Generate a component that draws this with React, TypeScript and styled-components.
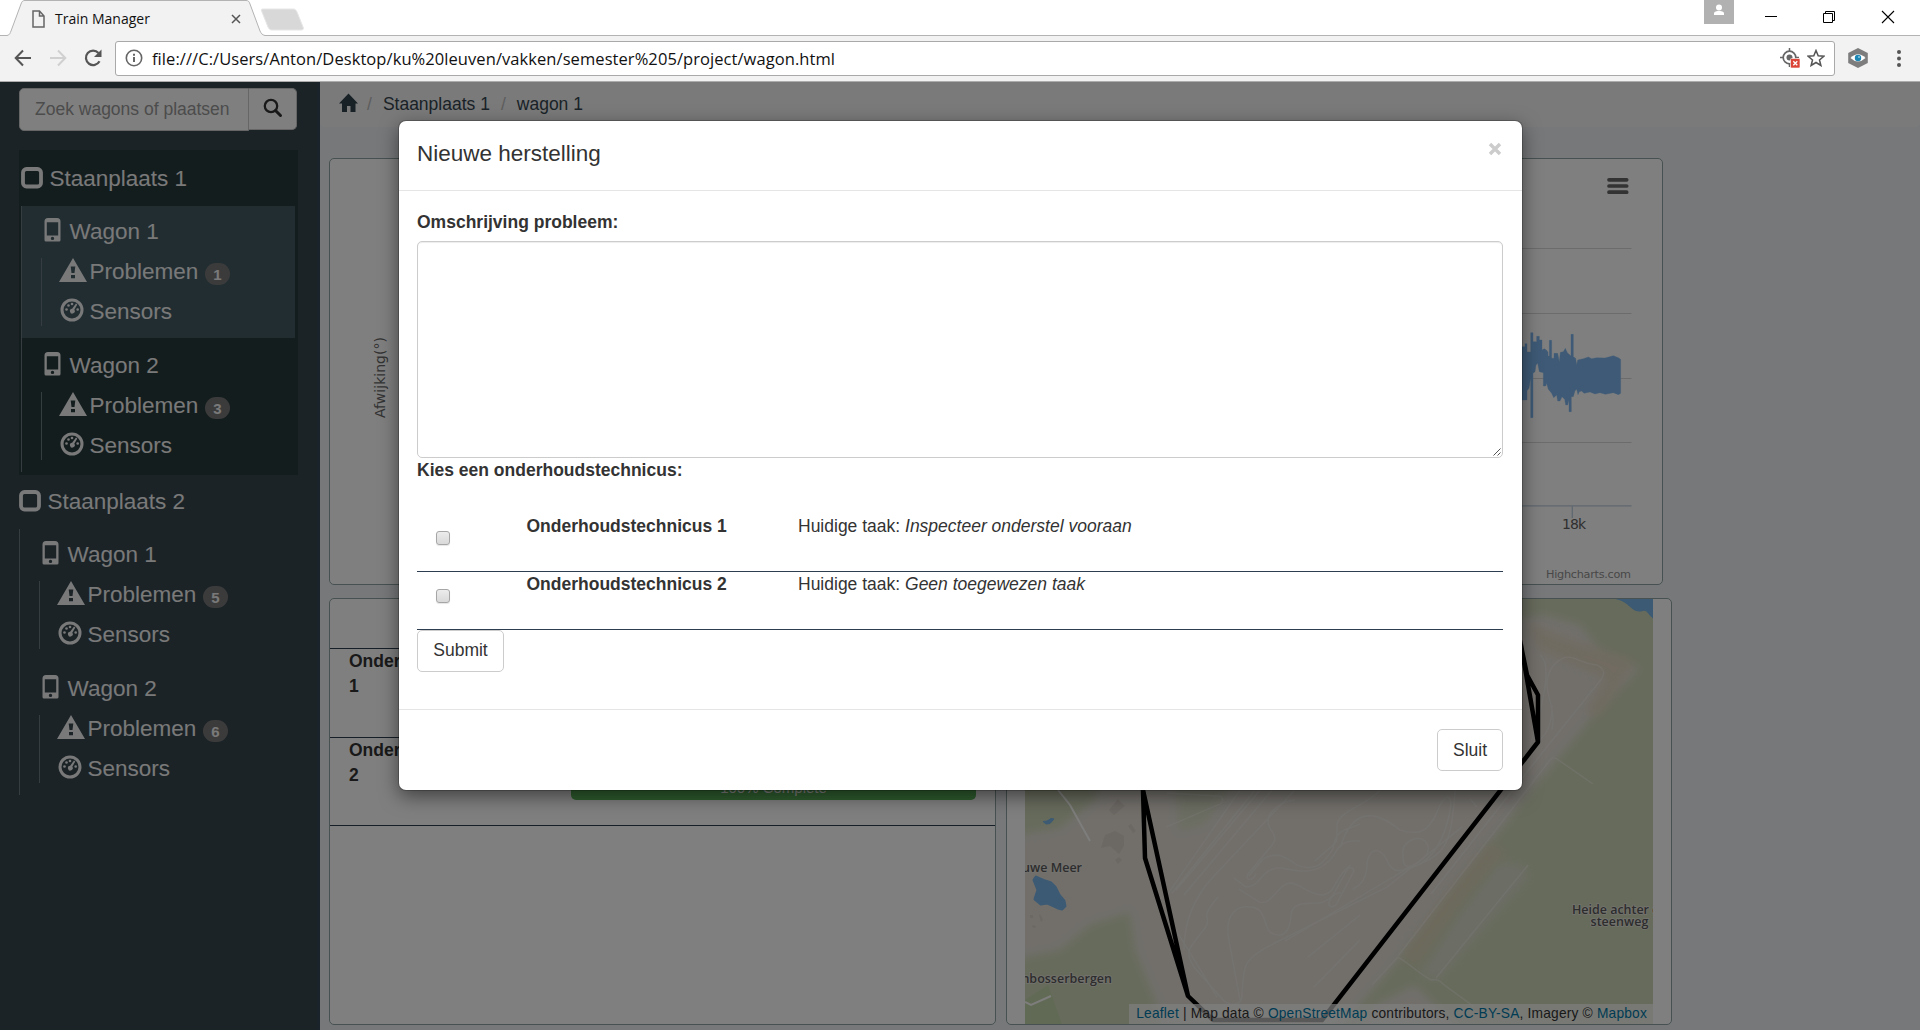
import React from "react";
import styled, { createGlobalStyle } from "styled-components";

const GlobalStyle = createGlobalStyle`
  * { box-sizing: border-box; }
  html, body { margin: 0; padding: 0; overflow: hidden; }
  body {
    font-family: "Liberation Sans", Arial, sans-serif;
    font-size: 17.5px;
    line-height: 25px;
    color: #333;
    background: #fff;
  }
`;

/* ---------- window frame ---------- */

const Window = styled.div`
  width: 1920px;
  height: 1030px;
  display: flex;
  flex-direction: column;
  overflow: hidden;
`;

const TabStrip = styled.div`
  height: 36px;
  display: flex;
  align-items: flex-start;
  background: linear-gradient(#fff 35px, #b3b3b3 35px);
`;

const Tab = styled.div`
  position: relative;
  width: 258px;
  height: 36px;
  margin-left: 7px;
  padding: 0 24px 0 25px;
  display: flex;
  align-items: center;
`;

const TabShape = styled.svg`
  position: absolute;
  inset: 0;
`;

const TabTitle = styled.span`
  position: relative;
  flex: 1;
  margin: 2px 0 0 10px;
  font: 14px/20px "Open Sans", sans-serif;
  letter-spacing: 0;
  color: #111;
  white-space: nowrap;
`;

const TabIcon = styled.svg`
  position: relative;
  flex: none;
  margin-top: 2px;
`;

const NewTab = styled.svg`
  margin: 8px 0 0 -5px;
`;

const WindowButtons = styled.div`
  margin-left: auto;
  display: flex;
  align-items: flex-start;
`;

const UserBadge = styled.div`
  width: 30px;
  height: 24px;
  margin-right: 30px;
  background: #b1b1b1;
`;

const WindowButton = styled.svg`
  margin: 10px 25px 0 0;
  padding: 0;
`;

const Toolbar = styled.div`
  height: 46px;
  display: flex;
  align-items: center;
  padding: 0 0 1px 13px;
  background: #f2f2f2;
  border-bottom: 1px solid #acacac;
`;

const NavIcon = styled.svg<{ $gap: number }>`
  flex: none;
  margin-right: ${(p) => p.$gap}px;
`;

const Omnibox = styled.div`
  flex: 1;
  height: 35px;
  display: flex;
  align-items: center;
  padding: 0 9px 0 9px;
  background: #fff;
  border: 1px solid #a9a9a9;
  border-radius: 3px;
`;

const Url = styled.span`
  flex: 1;
  margin: 1px 0 0 7px;
  font: 16.5px/24px "Open Sans", sans-serif;
  letter-spacing: 0.07px;
  color: #111;
  white-space: nowrap;
`;

/* ---------- page ---------- */

const Page = styled.div`
  position: relative;
  flex: 1;
  display: flex;
  background: #eff1f4;
  overflow: hidden;
`;

const Sidebar = styled.aside`
  width: 320px;
  padding: 6px 20px 0 19px;
  background: #36464f;
  border-right: 3px solid #344655;
`;

const SearchGroup = styled.div`
  display: flex;
  align-items: flex-start;
  width: 278px;
  margin-bottom: 19px;
`;

const SearchInput = styled.div`
  width: 230px;
  height: 43px;
  padding: 0 15px;
  line-height: 41px;
  color: #999;
  background: #fff;
  border: 1px solid #ccc;
  border-radius: 5px 0 0 5px;
  white-space: nowrap;
`;

const SearchButton = styled.div`
  width: 48px;
  height: 42px;
  display: flex;
  align-items: center;
  justify-content: center;
  padding-bottom: 3px;
  background: #fff;
  border: 1px solid #ccc;
  border-left: 0;
  border-radius: 0 5px 5px 0;
`;

const Place = styled.section<{ $active?: boolean }>`
  width: ${(p) => (p.$active ? 279 : 281)}px;
  margin-left: ${(p) => (p.$active ? 0 : -2)}px;
  padding: ${(p) => (p.$active ? "2px 3px 3px 2px" : "0 3px 0 2px")};
  background: ${(p) => (p.$active ? "#293a3d" : "transparent")};
  color: #f2f2f2;
  font-size: 22.5px;
  line-height: 30px;
`;

const PlaceTitle = styled.div`
  height: 54px;
  display: flex;
  align-items: center;
  gap: 6.5px;
`;

const WagonList = styled.div`
  display: flex;
  flex-direction: column;
  gap: 2px;
  border-left: 1px solid #6d7b80;
`;

const Wagon = styled.div<{ $active?: boolean }>`
  height: 132px;
  padding: 6px 0 0 19px;
  background: ${(p) => (p.$active ? "#445b65" : "transparent")};
`;

const WagonTitle = styled.div`
  height: 46px;
  display: flex;
  gap: 8.5px;
  padding-left: 3px;
  line-height: 40px;
`;

const SubList = styled.div`
  display: flex;
  flex-direction: column;
  gap: 12px;
  padding-left: 17px;
  border-left: 1px solid #6d7b80;
`;

const SubItem = styled.div`
  height: 28px;
  display: flex;
  align-items: center;
  gap: 2.5px;
`;

const Badge = styled.span`
  width: 25px;
  height: 22px;
  margin: 4px 0 0 4px;
  border-radius: 12px;
  background: #777;
  font-size: 15px;
  font-weight: bold;
  line-height: 23px;
  text-align: center;
`;

const SideIcon = styled.svg<{ $shift?: number }>`
  flex: none;
  fill: #f2f2f2;
  margin-top: ${(p) => p.$shift ?? 0}px;
`;

const Main = styled.main`
  flex: 1;
  display: flex;
  flex-direction: column;
`;

const Breadcrumb = styled.nav`
  height: 45px;
  display: flex;
  align-items: center;
  padding: 0 0 1px 19px;
  background: #f5f5f5;
  border-radius: 0 0 5px 5px;
  color: #36454f;
`;

const HomeIcon = styled.svg`
  margin-top: -2px;
`;

const Separator = styled.span<{ $before: number }>`
  margin: 0 11px 0 ${(p) => p.$before}px;
  color: #bbb;
`;

const Dashboard = styled.div`
  display: flex;
  flex-direction: column;
  gap: 13px;
  padding: 31px 0 0 9px;
`;

const PanelRow = styled.div`
  display: flex;
  gap: 10px;
`;

const Panel = styled.section<{ $width: number }>`
  width: ${(p) => p.$width}px;
  height: 427px;
  background: #fff;
  border: 1px solid #8fa3a3;
  border-radius: 5px;
  overflow: hidden;
`;

const TaskHead = styled.div`
  height: 50px;
  border-bottom: 1px solid #2c3e50;
`;

const TaskRow = styled.div`
  height: 88.7px;
  display: grid;
  grid-template-columns: 221px 405px;
  padding-left: 20px;
  border-bottom: 1px solid #2c3e50;
`;

const TaskName = styled.b`
  width: 190px;
  margin-left: -1px;
`;

const Progress = styled.div`
  height: 25px;
  margin-top: 37px;
  border-radius: 5px;
  background: #5cb85c;
  color: #fff;
  font-size: 15px;
  text-align: center;
`;

const MapFrame = styled.div`
  position: relative;
  width: 628px;
  height: 425px;
  margin-left: 18px;
  overflow: hidden;
`;

const Attribution = styled.div`
  position: absolute;
  right: 0;
  bottom: 0;
  height: 20px;
  padding: 0 6px 0 7px;
  background: rgba(255, 255, 255, 0.7);
  font-size: 13.75px;
  letter-spacing: 0.19px;
  line-height: 19px;
  white-space: nowrap;
  color: #333;
`;

const MapLink = styled.span`
  color: #0078a8;
`;

/* ---------- modal ---------- */

const Backdrop = styled.div`
  position: absolute;
  inset: 0;
  padding: 39px 0 0 399px;
  background: rgba(0, 0, 0, 0.5);
`;

const Modal = styled.div`
  width: 1123px;
  height: 669px;
  display: flex;
  flex-direction: column;
  background: #fff;
  border-radius: 7px;
  box-shadow: 0 6px 19px rgba(0, 0, 0, 0.5), 0 0 0 1px rgba(0, 0, 0, 0.2);
`;

const ModalHeader = styled.header`
  height: 70px;
  display: flex;
  align-items: flex-start;
  justify-content: space-between;
  padding: 17px 20px 0 18px;
  border-bottom: 1px solid #e5e5e5;
`;

const ModalTitle = styled.h4`
  margin: 0;
  font-size: 22.5px;
  font-weight: normal;
  line-height: 32px;
`;

const CloseIcon = styled.svg`
  margin-top: 4px;
`;

const ModalBody = styled.div`
  height: 518px;
  padding: 19px 19px 0 18px;
`;

const Label = styled.label`
  display: block;
  font-weight: bold;
`;

const TextArea = styled.div`
  height: 217px;
  margin-top: 6px;
  display: flex;
  align-items: flex-end;
  justify-content: flex-end;
  padding: 1px;
  border: 1px solid #ccc;
  border-radius: 5px;
  box-shadow: inset 0 1px 1px rgba(0, 0, 0, 0.075);
`;

const Technicians = styled.div`
  margin-top: 31px;
`;

const Technician = styled.div`
  height: 58px;
  display: grid;
  grid-template-columns: 109.5px 271.5px 1fr;
  border-bottom: 1px solid #2c3e50;
`;

const CheckBox = styled.span`
  width: 14px;
  height: 14px;
  margin: 17px 0 0 19px;
  border: 1px solid #a6a6a6;
  border-radius: 3px;
  background: linear-gradient(#ececec, #d9d9d9);
  box-shadow: 0 1px 1px rgba(0, 0, 0, 0.1);
`;

const Button = styled.button<{ $width: number; $lift?: number }>`
  width: ${(p) => p.$width}px;
  height: 42px;
  padding: 0 0 ${(p) => p.$lift ?? 0}px;
  font: 17.5px/25px "Liberation Sans", Arial, sans-serif;
  color: #333;
  background: #fff;
  border: 1px solid #ccc;
  border-radius: 5px;
`;

const ModalFooter = styled.footer`
  flex: 1;
  display: flex;
  justify-content: flex-end;
  align-items: flex-start;
  padding: 19px 19px 0;
  border-top: 1px solid #e5e5e5;
`;

/* ---------- drawings ---------- */

const WarningIcon = () => (
  <SideIcon $shift={-5} width="28" height="24" viewBox="0 0 28 24">
    <path fillRule="evenodd" d="M14 0 28 24H0ZM11.7 8.5l.8 6.5h3l.8-6.5ZM12 17h4v3.3h-4Z" />
  </SideIcon>
);

const GaugeIcon = () => (
  <SideIcon $shift={-4} width="28" height="24" viewBox="0 0 28 24">
    <circle cx="13" cy="12" r="10" fill="none" stroke="#f2f2f2" strokeWidth="3" />
    <circle cx="7.5" cy="11.5" r="1.3" />
    <circle cx="9.5" cy="7.5" r="1.3" />
    <circle cx="13" cy="6" r="1.3" />
    <circle cx="18.7" cy="11.5" r="1.3" />
    <path d="M17 5.6l1.3.8-3 5.3a2.4 2.4 0 1 1-2.2-1Z" />
  </SideIcon>
);

const PhoneIcon = () => (
  <SideIcon $shift={6} width="17" height="24" viewBox="0 0 17 24">
    <path
      fillRule="evenodd"
      d="M4 0h9a3.500 3.500 0 0 1 3.500 3.500v18.500a1.500 1.500 0 0 1-1.500 1.500H2A1.500 1.500 0 0 1 .5 22V3.500A3.500 3.500 0 0 1 4 0ZM2.800 4.300v13.200h11.400V4.300ZM8.500 18.700a1.700 1.700 0 1 0 0 3.400 1.700 1.700 0 0 0 0-3.400Z"
    />
  </SideIcon>
);

const SquareIcon = () => (
  <SideIcon $shift={-3} width="22" height="22" viewBox="0 0 22 22">
    <rect x="2" y="2" width="18" height="17.5" rx="3.5" fill="none" stroke="#f2f2f2" strokeWidth="3.8" />
  </SideIcon>
);

type WagonData = { name: string; problems: number; active?: boolean };

const WagonItem = ({ name, problems, active }: WagonData) => (
  <Wagon $active={active}>
    <WagonTitle>
      <PhoneIcon />
      {name}
    </WagonTitle>
    <SubList>
      <SubItem>
        <WarningIcon />
        Problemen
        <Badge>{problems}</Badge>
      </SubItem>
      <SubItem>
        <GaugeIcon />
        Sensors
      </SubItem>
    </SubList>
  </Wagon>
);

const places: { name: string; active?: boolean; wagons: WagonData[] }[] = [
  {
    name: "Staanplaats 1",
    active: true,
    wagons: [
      { name: "Wagon 1", problems: 1, active: true },
      { name: "Wagon 2", problems: 3 },
    ],
  },
  {
    name: "Staanplaats 2",
    wagons: [
      { name: "Wagon 1", problems: 5 },
      { name: "Wagon 2", problems: 6 },
    ],
  },
];

const technicians = [
  { name: "Onderhoudstechnicus 1", task: "Inspecteer onderstel vooraan" },
  { name: "Onderhoudstechnicus 2", task: "Geen toegewezen taak" },
];

const gridLines = [248.5, 313.5, 378.5, 442.5];

const Chart = () => (
  <svg width="1332" height="425" viewBox="330 159 1332 425" fontFamily="DejaVu Sans, sans-serif">
    {gridLines.map((y) => (
      <path key={y} d={`M420 ${y}H1631.5`} stroke="#d8d8d8" />
    ))}
    <path d="M420 505.8H1631.5M1572.3 506v12" stroke="#c0d0e0" strokeWidth="1.3" />
    <g transform="translate(1480 100) scale(.33333)">
      <path
        fill="#7cb5ec"
        stroke="#7cb5ec"
        strokeWidth="1"
        strokeLinejoin="round"
        d="M100 740H135V731H141V756H152V698H159V725H170V709H178V720H186V750L193 746 200 751 204 757V768H208V721H215V775H222V760H233L238 785 241 757 250 755 256 745 262 758 273 768V703H280V770L287 775 290 795 293 780 310 776 325 771 335 776 350 773 375 774 400 767 415 773 422 778V880L415 884 400 878 376 883 360 878 345 882 330 876 312 880 305 873 298 875 294 884 290 868 285 872 280 890H274V935H267V900L263 915H257L254 898 246 890 240 903H233L230 885 221 893 215 880 205 868 200 850 197 858H190V818L178 815 173 790 168 795 165 815 159 820V953H152V835L147 865 141 872V900H100Z"
      />
    </g>
    <g stroke="#666" strokeWidth="3.7" strokeLinecap="round">
      <path d="M1609 179.800h17.700M1609 186h17.700M1609 192.200h17.700" />
    </g>
    <text x="1574" y="529" textAnchor="middle" fontSize="14" textLength="24" fill="#606060">18k</text>
    <text x="1631" y="578" textAnchor="end" fontSize="11.25" textLength="85" fill="#909090">Highcharts.com</text>
    <text transform="translate(384.5 377.5) rotate(-90)" textAnchor="middle" fontSize="14" textLength="81" fill="#666">
      Afwijking(°)
    </text>
  </svg>
);

const MapDrawing = () => (
  <svg width="628" height="425" viewBox="1025 599 628 425" fontFamily="Open Sans, sans-serif">
    <defs>
      <filter id="soft" x="-20%" y="-20%" width="140%" height="140%">
        <feGaussianBlur stdDeviation="5" />
      </filter>
    </defs>
    <rect x="1025" y="599" width="628" height="425" fill="#e4dfd7" />
    <g fill="#ced7b8" filter="url(#soft)">
      <path d="M1010 750H1110L1095 800 1060 828 1010 836Z" />
      <path d="M1175 780H1235L1205 825 1178 832Z" opacity=".6" />
      <path d="M1010 960L1060 950 1090 925 1130 912 1135 950 1155 1000 1165 1040H1010Z" />
      <path d="M1500 580H1670V1040H1470L1415 985 1375 1005 1350 1040H1330L1400 958 1470 868 1540 780 1590 720 1640 668 1600 650 1580 625 1545 615 1520 618Z" />
    </g>
    <path d="M1025 1000 1048 985 1062 1024H1025Z" fill="#bcd3a0" opacity=".6" />
    <g fill="#e0d3b8" filter="url(#soft)" opacity=".65">
      <path d="M1490 842 1508 852 1465 900 1418 966 1400 958 1438 905Z" />
      <path d="M1525 622 1570 640 1636 660 1600 718 1585 712 1605 678 1540 650Z" />
    </g>
    <path d="M1500 862 1525 866 1528 878 1438 980 1420 975 1455 920Z" fill="#dcdcd0" filter="url(#soft)" opacity=".8" />
    <g fill="#78b4e6" stroke="#78b4e6" strokeLinejoin="round">
      <path d="M1612 598C1630 600 1630 612 1641 611 1648 608 1649 616 1653 618V598Z" />
      <path
        d="M1034 880 1036 877 1045 881 1051 883 1055 887 1059 895 1064 901 1065 906 1062 909 1058 908 1047 903 1041 904 1035 899 1038 890Z"
        strokeWidth="3"
      />
      <path d="M1043 821.500 1047 821 1051 818.500 1054 819 1050 823.500 1046 824Z" />
    </g>
    <g fill="#d8d0c8">
      <path d="M1109 810 1118 799 1125 806 1114 815ZM1105 835l10-4 9 5v10l-5 8-9-8-9 2ZM1115 860l4-3 3 3-4 4ZM1128 826l3-2 5 7-3 2ZM1030 915h3v3h-3ZM1040 914l3 6-2 2-2-7ZM1033 925l3 1-1 2-3-1Z" />
    </g>
    <g fill="none" stroke="#f1eee9" strokeWidth="1.3" opacity=".5">
      <path d="M1163 912c-3-4-8-8-5-10 0-3 3-4 4-4M1165 912l52 85M1166 827l54-23c5-3 2-9-3-8l-50-3" />
      <path d="M1165 898 1240 790M1172 893 1255 790M1176 890 1260 790M1184 895 1272 790" />
      <path d="M1184 950c0-30 12-55 30-74L1295 790M1218 897c-20 24-6 16-12 30-18 22-22 25-12 40l30 34c10 6 18 4 18-7 2-30 2-34 25-47l120-60 75-60M1240 1000 1228 935c-2-22 10-30 22-28 16 0 14 20 20 25 12 8 20 0 21-16 0-16 20-12 28-13 10 0 14-12 22-10" />
      <path d="M1234 878l12 9c16 0 14-20 36-19 24 6 40 4 52-13 5-12 13-15 26-14M1239 889l20 13c14 4 18-19 32-19 12 2 18 12 32 12 14-2 10-18 28-30M1249 876l14-17c15-8 22-2 34 6 20 8 28-4 36-16 2-20 12-18 27-25M1295 800c-12 0-28 12-27 22 1 12 15 12 0 28l-20 24c-4 6 4 8 8 0M1380 790c-12 15-46 22-43 38 0 20 2 10-22 33M1329 902l18-32c4-5 8-1 6 3l-16 30c-3 6-9 4-8-1Z" />
      <path d="M1340 848c15-50 45-30 60-18 24 8 32-4 40-25 9-15 14-8 8 15-8 30-20 40-32 46-12 2-13-1-13-10-3-14 15-22 22-15 9 10-2 20-16 26-14 9-20-1-22-7-10-18-21-7-20 7-2 20-14 20-14 23M1455 790c-4 60-10 65-50 80l-120 71M1360 915l-52 42M1360 940l-46 47M1470 799l7 8" />
      <path d="M1398 956 1550 760c3-4 5-2 7-1l36 25M1372 985l25-27c3-3 20 15 34 22 6-1 8 0 12 4l30 22M1436 978l92-113" />
      <path d="M1552 730c4-20-6-35-5-48 2-20 18-27 26-24 8 2 10 6 24 7 10 5 7 11 2 17l-53 66-115 146M1540 655c14 10 0 60-10 90M1552 705c0 30-10 30-25 50l-50 66" />
    </g>
    <path d="M1025 1002l6 3 20-9M1058 790l12 15 20 36" fill="none" stroke="#fbfaf8" strokeWidth="2" />
    <path
      d="M1143 770V790L1145 858 1188 996 1213 1020H1322L1538 742V695L1527 675 1519 636M1143 790L1188 996M1521 645L1538 742"
      fill="none"
      stroke="#000"
      strokeWidth="4.500"
      strokeLinejoin="round"
    />
    <g fontSize="12.5" fontWeight="600" fill="#5a5a5a" stroke="#e8e6df" strokeWidth="1.5" paintOrder="stroke">
      <text x="1082" y="872" textAnchor="end">Nieuwe Meer</text>
      <text x="1112" y="983" textAnchor="end">Langenbosserbergen</text>
      <text x="1572" y="914" textLength="77">Heide achter</text>
      <text x="1590.5" y="926" textLength="58">steenweg</text>
      <text x="1652" y="914">de</text>
    </g>
  </svg>
);

export default function App() {
  return (
    <Window>
      <GlobalStyle />
      <TabStrip>
        <Tab>
          <TabShape width="258" height="36" viewBox="0 0 258 36">
            <path d="M0 36V35.5C3 35 3 33 4 31L14 4C15 1 16 .5 18 .5H239C241 .5 242 1 243 4L253 31C254 33 255 35 258 35.5V36Z" fill="#f2f2f2" />
            <path d="M0 35.5C3 35 3 33 4 31L14 4C15 1 16 .5 18 .5H239C241 .5 242 1 243 4L253 31C254 33 255 35 258 35.5" fill="none" stroke="#b3b3b3" />
          </TabShape>
          <TabIcon width="13" height="18" viewBox="0 0 13 18">
            <path d="M1 1h6.500L12 6v11H1ZM7.500 1v5H12" fill="none" stroke="#666" strokeWidth="1.500" />
          </TabIcon>
          <TabTitle>Train Manager</TabTitle>
          <TabIcon width="10" height="10" viewBox="0 0 10 10">
            <path d="M1 1l8 8M9 1 1 9" stroke="#555" strokeWidth="1.500" />
          </TabIcon>
        </Tab>
        <NewTab width="45" height="23" viewBox="0 0 45 23">
          <path d="M3 1H33C35 1 36 2 37 4L43 19C44 21 43 22 41 22H12C10 22 9 21 8 19L2 4C1 2 1 1 3 1Z" fill="#d8d8d8" stroke="#e6e6e6" />
        </NewTab>
        <WindowButtons>
          <UserBadge>
            <svg width="30" height="24" viewBox="0 0 30 24">
              <circle cx="15" cy="7.5" r="3" fill="#fff" />
              <path d="M10 15v-1.500c0-2 3-2.500 5-2.500s5 .5 5 2.500V15Z" fill="#fff" />
            </svg>
          </UserBadge>
          <WindowButton width="33" height="14" viewBox="0 0 33 14">
            <path d="M1 6.500h12" stroke="#000" />
          </WindowButton>
          <WindowButton width="34" height="14" viewBox="0 0 34 14">
            <path d="M1.500 3.500h9v9h-9ZM3.500 3.500v-2h9v9h-2" fill="none" stroke="#000" />
          </WindowButton>
          <WindowButton width="14" height="14" viewBox="0 0 14 14">
            <path d="M1 1l12 12M13 1 1 13" stroke="#000" strokeWidth="1.100" />
          </WindowButton>
        </WindowButtons>
      </TabStrip>
      <Toolbar>
        <NavIcon $gap={15} width="20" height="20" viewBox="0 0 20 20">
          <path d="M18 10H3M10 2.500 2.700 10l7.300 7.500" fill="none" stroke="#555" strokeWidth="2" />
        </NavIcon>
        <NavIcon $gap={15} width="20" height="20" viewBox="0 0 20 20">
          <path d="M2 10h15M10 2.500l7.300 7.500-7.300 7.500" fill="none" stroke="#d0d0d0" strokeWidth="2" />
        </NavIcon>
        <NavIcon $gap={12} width="20" height="20" viewBox="0 0 20 20">
          <path d="M16.500 13.200A7.200 7.200 0 1 1 15.500 5" fill="none" stroke="#555" strokeWidth="2.200" />
          <path d="M18.500 1.500V9H11Z" fill="#555" />
        </NavIcon>
        <Omnibox>
          <NavIcon $gap={2} width="18" height="18" viewBox="0 0 18 18">
            <circle cx="9" cy="9" r="7.700" fill="none" stroke="#666" strokeWidth="1.600" />
            <path d="M9 8v5M9 4.700v2" stroke="#666" strokeWidth="2" />
          </NavIcon>
          <Url>file:///C:/Users/Anton/Desktop/ku%20leuven/vakken/semester%205/project/wagon.html</Url>
          <NavIcon $gap={7} width="20" height="20" viewBox="0 0 20 20">
            <circle cx="9.500" cy="9.500" r="6.300" fill="none" stroke="#666" strokeWidth="1.700" />
            <circle cx="9.500" cy="9.500" r="3" fill="#666" />
            <path d="M9.500 0v4M9.500 15v4M0 9.500h4M15 9.500h4" stroke="#666" strokeWidth="1.500" />
            <rect x="10.500" y="10.500" width="9.500" height="9.500" rx="1" fill="#db4437" stroke="#fff" strokeWidth=".6" />
            <path d="M13.300 13.300l4 4M17.300 13.300l-4 4" stroke="#fff" strokeWidth="1.300" />
          </NavIcon>
          <NavIcon $gap={0} width="18" height="18" viewBox="0 0 18 18">
            <path d="M9 1.500l2.200 5.300 5.700.4-4.400 3.700 1.400 5.600L9 13.500l-4.900 3 1.400-5.600L1.100 7.200l5.700-.4Z" fill="none" stroke="#555" strokeWidth="1.500" />
          </NavIcon>
        </Omnibox>
        <NavIcon $gap={27} width="22" height="22" viewBox="0 0 22 22" style={{ marginLeft: 12, marginTop: -1 }}>
          <path d="M11 1l9.800 5v10L11 21l-9.800-5V6Z" fill="#7d7d7d" />
          <path d="M3.500 11Q11 3.500 18.500 11 11 18 3.500 11Z" fill="#fff" />
          <circle cx="11" cy="11" r="3.200" fill="#1c87b5" />
          <circle cx="12" cy="10" r="1" fill="#8cc8e0" />
        </NavIcon>
        <NavIcon $gap={18} width="6" height="20" viewBox="0 0 6 20">
          <g fill="#555">
            <circle cx="3" cy="4" r="2" />
            <circle cx="3" cy="10.500" r="2" />
            <circle cx="3" cy="17" r="2" />
          </g>
        </NavIcon>
      </Toolbar>

      <Page>
        <Sidebar>
          <SearchGroup>
            <SearchInput>Zoek wagons of plaatsen</SearchInput>
            <SearchButton>
              <svg width="20" height="20" viewBox="0 0 20 20">
                <circle cx="8" cy="8" r="6.200" fill="none" stroke="#333" strokeWidth="2.300" />
                <path d="M12.500 12.500l5 5" stroke="#333" strokeWidth="3" strokeLinecap="round" />
              </svg>
            </SearchButton>
          </SearchGroup>
          {places.map((place) => (
            <Place key={place.name} $active={place.active}>
              <PlaceTitle>
                <SquareIcon />
                {place.name}
              </PlaceTitle>
              <WagonList>
                {place.wagons.map((w) => (
                  <WagonItem key={w.name} {...w} />
                ))}
              </WagonList>
            </Place>
          ))}
        </Sidebar>

        <Main>
          <Breadcrumb>
            <HomeIcon width="20" height="20" viewBox="0 0 20 20">
              <path d="M9.500 .5 19 10.500H16.500V19H11.500V13H8V19H3V10.500H0Z" fill="#2f424d" />
            </HomeIcon>
            <Separator $before={8}>/</Separator>
            Staanplaats 1
            <Separator $before={11}>/</Separator>
            wagon 1
          </Breadcrumb>
          <Dashboard>
            <Panel $width={1334}>
              <Chart />
            </Panel>
            <PanelRow>
              <Panel $width={667}>
                <TaskHead />
                <TaskRow>
                  <TaskName>Onderhoudstechnicus 1</TaskName>
                </TaskRow>
                <TaskRow>
                  <TaskName>Onderhoudstechnicus 2</TaskName>
                  <Progress>100% Complete</Progress>
                </TaskRow>
              </Panel>
              <Panel $width={666}>
                <MapFrame>
                  <MapDrawing />
                  <Attribution>
                    <MapLink>Leaflet</MapLink> | Map data © <MapLink>OpenStreetMap</MapLink> contributors,{" "}
                    <MapLink>CC-BY-SA</MapLink>, Imagery © <MapLink>Mapbox</MapLink>
                  </Attribution>
                </MapFrame>
              </Panel>
            </PanelRow>
          </Dashboard>
        </Main>

        <Backdrop>
          <Modal>
            <ModalHeader>
              <ModalTitle>Nieuwe herstelling</ModalTitle>
              <CloseIcon width="14" height="14" viewBox="0 0 14 14">
                <path d="M2 2l10 10M12 2 2 12" stroke="#ccc" strokeWidth="3.400" />
              </CloseIcon>
            </ModalHeader>
            <ModalBody>
              <Label>Omschrijving probleem:</Label>
              <TextArea>
                <svg width="8" height="8" viewBox="0 0 8 8">
                  <path d="M.5 7.500l7-7M4.500 7.500l3-3" stroke="#555" />
                </svg>
              </TextArea>
              <Label>Kies een onderhoudstechnicus:</Label>
              <Technicians>
                {technicians.map((t) => (
                  <Technician key={t.name}>
                    <CheckBox />
                    <b>{t.name}</b>
                    <span>
                      Huidige taak: <i>{t.task}</i>
                    </span>
                  </Technician>
                ))}
              </Technicians>
              <Button $width={87} $lift={1}>Submit</Button>
            </ModalBody>
            <ModalFooter>
              <Button $width={66}>Sluit</Button>
            </ModalFooter>
          </Modal>
        </Backdrop>
      </Page>
    </Window>
  );
}
